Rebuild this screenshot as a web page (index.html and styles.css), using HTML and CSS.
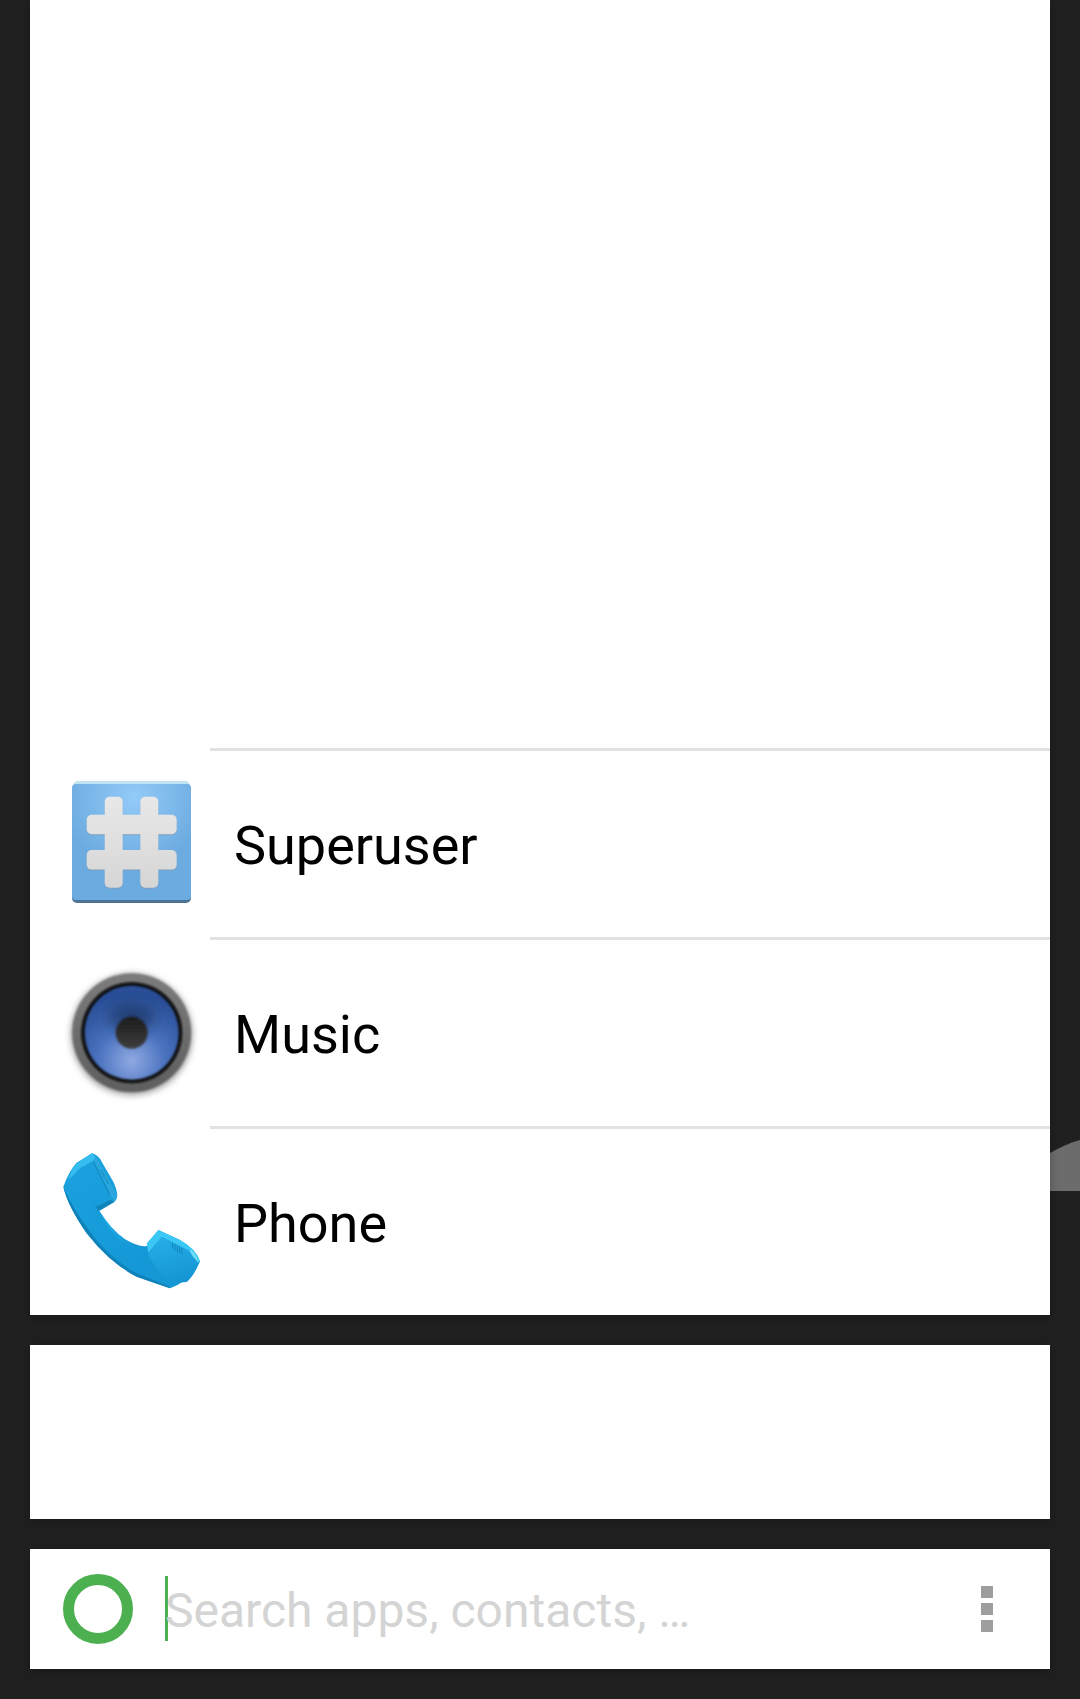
FILE: index.html
```html
<!DOCTYPE html>
<html lang="en">
<head>
  <meta charset="UTF-8">
  <meta name="viewport" content="width=device-width, initial-scale=1.0">
  <title>Search</title>
  <link rel="stylesheet" href="styles.css">
</head>
<body>
  <!-- bit of wallpaper showing behind the cards -->
  <svg class="wallpaper-shape" viewBox="0 0 30 51" aria-hidden="true">
    <path d="M0 13C9 8 19 3 30 0V51H0Z" fill="#6c6c6c"/>
  </svg>

  <div class="card results">
    <div class="app-row">
      <div class="app-icon">
        <svg viewBox="0 14 140 140" width="140" height="140" aria-hidden="true">
          <defs>
            <radialGradient id="suBg" cx="0.52" cy="0.12" r="0.6">
              <stop offset="0" stop-color="#93caf8"/>
              <stop offset="1" stop-color="#6cabe0"/>
            </radialGradient>
            <linearGradient id="suHash" gradientUnits="userSpaceOnUse" x1="0" y1="36" x2="0" y2="128">
              <stop offset="0" stop-color="#e8e8e8"/>
              <stop offset="1" stop-color="#d6d6d6"/>
            </linearGradient>
          </defs>
          <rect x="13" y="21" width="117" height="20" rx="5" fill="#bfe3f0"/>
          <rect x="12" y="110" width="119" height="33" rx="5" fill="#4b7494"/>
          <rect x="12" y="24" width="119" height="116" rx="4" fill="url(#suBg)"/>
          <g fill="#7f9fbb">
            <rect x="44.7" y="37.7" width="18" height="91" rx="5"/>
            <rect x="80.3" y="37.7" width="18" height="91" rx="5"/>
            <rect x="26.7" y="55.7" width="90" height="19.6" rx="5"/>
            <rect x="26.7" y="91" width="90" height="19.6" rx="5"/>
          </g>
          <g fill="url(#suHash)">
            <rect x="44.7" y="36.7" width="18" height="91" rx="5"/>
            <rect x="80.3" y="36.7" width="18" height="91" rx="5"/>
            <rect x="26.7" y="54.7" width="90" height="19.6" rx="5"/>
            <rect x="26.7" y="90" width="90" height="19.6" rx="5"/>
          </g>
        </svg>
      </div>
      <span class="app-name">Superuser</span>
    </div>

    <div class="app-row">
      <div class="app-icon">
        <svg viewBox="0 0 140 140" width="140" height="140" aria-hidden="true">
          <defs>
            <radialGradient id="cone" cx="0.5" cy="0.8" r="0.72">
              <stop offset="0" stop-color="#8fa9e2"/>
              <stop offset="0.5" stop-color="#4a72bf"/>
              <stop offset="1" stop-color="#2a4f98"/>
            </radialGradient>
            <linearGradient id="dome" x1="0" y1="0" x2="0" y2="1">
              <stop offset="0" stop-color="#1c1c1c"/>
              <stop offset="1" stop-color="#3e3e3e"/>
            </linearGradient>
            <linearGradient id="rim" x1="0" y1="0" x2="0" y2="1">
              <stop offset="0" stop-color="#7c7c7c"/>
              <stop offset="1" stop-color="#5e5e5e"/>
            </linearGradient>
            <filter id="soft" x="-20%" y="-20%" width="140%" height="140%">
              <feGaussianBlur stdDeviation="3"/>
            </filter>
            <filter id="softer" x="-20%" y="-20%" width="140%" height="140%">
              <feGaussianBlur stdDeviation="1"/>
            </filter>
            <filter id="dimBlur" x="-40%" y="-40%" width="180%" height="180%">
              <feGaussianBlur stdDeviation="8"/>
            </filter>
          </defs>
          <circle cx="71.7" cy="71.5" r="61" fill="#a8a8a8" filter="url(#soft)"/>
          <circle cx="71.7" cy="69.7" r="59.5" fill="url(#rim)" filter="url(#softer)"/>
          <circle cx="71.7" cy="69.7" r="50.5" fill="#080808" filter="url(#softer)"/>
          <circle cx="71.7" cy="69.7" r="47" fill="url(#cone)" filter="url(#softer)"/>
          <ellipse cx="71.7" cy="54" rx="24" ry="14" fill="#17305f" opacity="0.75" filter="url(#dimBlur)"/>
          <circle cx="71.7" cy="69.7" r="16" fill="url(#dome)" filter="url(#softer)"/>
        </svg>
      </div>
      <span class="app-name">Music</span>
    </div>

    <div class="app-row">
      <div class="app-icon">
        <svg viewBox="90 96 435 420" width="145" height="140" aria-hidden="true">
          <defs>
            <linearGradient id="phoneBody" x1="0" y1="0" x2="1" y2="1">
              <stop offset="0" stop-color="#1ca2e0"/>
              <stop offset="0.6" stop-color="#1599d7"/>
              <stop offset="1" stop-color="#1596d3"/>
            </linearGradient>
            <linearGradient id="handleShine" x1="0.3" y1="0" x2="0.7" y2="1">
              <stop offset="0" stop-color="#2fbcf0"/>
              <stop offset="1" stop-color="#1599d7" stop-opacity="0"/>
            </linearGradient>
            <linearGradient id="mouthFace" x1="0.4" y1="0" x2="0.7" y2="1">
              <stop offset="0" stop-color="#25ade8"/>
              <stop offset="1" stop-color="#1494d2"/>
            </linearGradient>
          </defs>
          <!-- whole handset -->
          <path d="M187 100L140 128Q118 150 100 200Q112 255 170 340Q240 430 320 470L420 505Q470 490 510 425Q500 390 450 360L385 330L350 378Q325 382 285 358Q240 325 208 272L258 240Q268 225 250 185L215 125Q205 105 187 100Z" fill="url(#phoneBody)"/>
          <!-- shaded underside -->
          <path d="M100 200Q112 255 170 340Q240 430 320 470L420 505L416 498L325 462Q245 422 180 335Q125 260 100 200Z" fill="#0f82ba"/>
          <!-- earpiece rim and side -->
          <path d="M185 100L140 130L125 150L115 180L130 165L150 145L190 122L197 110Z" fill="#35bdf0"/>
          <path d="M195 105L262 225L255 245L240 225L200 145L190 125Z" fill="#2aa7de"/>
          <path d="M190 125L240 225" stroke="#128cc4" stroke-width="4"/>
          <path d="M212 150L236 192" stroke="#0f7fb2" stroke-width="6" stroke-dasharray="2 3"/>
          <path d="M208 272L255 245L240 240L195 262Z" fill="#0f85bb"/>
          <!-- handle highlight -->
          <path d="M208 272Q240 325 285 358Q325 382 350 378L350 412Q265 385 208 272Z" fill="url(#handleShine)"/>
          <!-- mouthpiece -->
          <path d="M358 398L394 350L488 396L508 428Q490 470 470 486L430 490Q390 470 355 405Z" fill="url(#mouthFace)"/>
          <path d="M385 330L350 370L355 398L395 350L485 395L505 428L511 425Q497 385 450 360Z" fill="#3cc8f5"/>
          <path d="M485 390Q502 405 505 428Q488 412 478 392Z" fill="#70dcf8"/>
          <g stroke="#0e7fb0" stroke-width="2.5">
            <path d="M428 368V386M435 372V391M442 376V396M449 380V400M456 384V403"/>
          </g>
        </svg>
      </div>
      <span class="app-name">Phone</span>
    </div>
  </div>

  <div class="card empty-card"></div>

  <div class="card search-bar">
    <div class="search-ring"></div>
    <div class="search-field">
      <span class="caret"></span>
      <span class="placeholder">Search apps, contacts, …</span>
    </div>
    <div class="overflow-menu">
      <span></span>
      <span></span>
      <span></span>
    </div>
  </div>
</body>
</html>
```

FILE: styles.css
```css
html, body {
  height: 100%;
}

body {
  margin: 0;
  box-sizing: border-box;
  height: 1699px;
  overflow: hidden;
  padding: 0 30px 30px;
  background-color: #202020;
  font-family: Roboto, Arial, sans-serif;
  display: flex;
  flex-direction: column;
  gap: 30px;
}

.wallpaper-shape {
  position: absolute;
  top: 1140px;
  left: 1050px;
  width: 30px;
  height: 51px;
}

.card {
  background-color: #fff;
  box-shadow: 0 3px 10px rgba(0, 0, 0, 0.25);
  position: relative;
}

.results {
  flex: 1;
  display: flex;
  flex-direction: column;
  justify-content: flex-end;
}

.app-row {
  height: 186px;
  display: flex;
  align-items: center;
  position: relative;
  border-top: 3px solid transparent;
}

/* divider starts after the icon column */
.app-row::before {
  content: "";
  position: absolute;
  top: -3px;
  left: 180px;
  right: 0;
  height: 3px;
  background-color: #e2e2e2;
}

.app-icon {
  width: 204px;
  padding-left: 30px;
  box-sizing: border-box;
  flex-shrink: 0;
  display: flex;
}

.app-icon svg {
  flex-shrink: 0;
  filter: blur(0.5px);
}

.app-name {
  font-size: 54px;
  margin-top: 2px;
  color: #000;
}

.empty-card {
  height: 174px;
}

.search-bar {
  height: 120px;
  display: flex;
  align-items: center;
  padding: 0 57px 0 33px;
}

.search-ring {
  width: 70px;
  height: 70px;
  box-sizing: border-box;
  border: 11px solid #4caf50;
  border-radius: 50%;
  flex-shrink: 0;
}

.search-field {
  flex: 1;
  display: flex;
  align-items: center;
  margin-left: 32px;
}

.caret {
  width: 3px;
  height: 65px;
  margin-bottom: 1px;
  background-color: #4caf50;
  flex-shrink: 0;
}

.placeholder {
  font-size: 48px;
  margin-left: -3px;
  margin-top: 3px;
  color: #d4d4d4;
}

.overflow-menu {
  display: flex;
  flex-direction: column;
  gap: 5px;
}

.overflow-menu span {
  width: 12px;
  height: 12px;
  background-color: #9e9e9e;
}
```
